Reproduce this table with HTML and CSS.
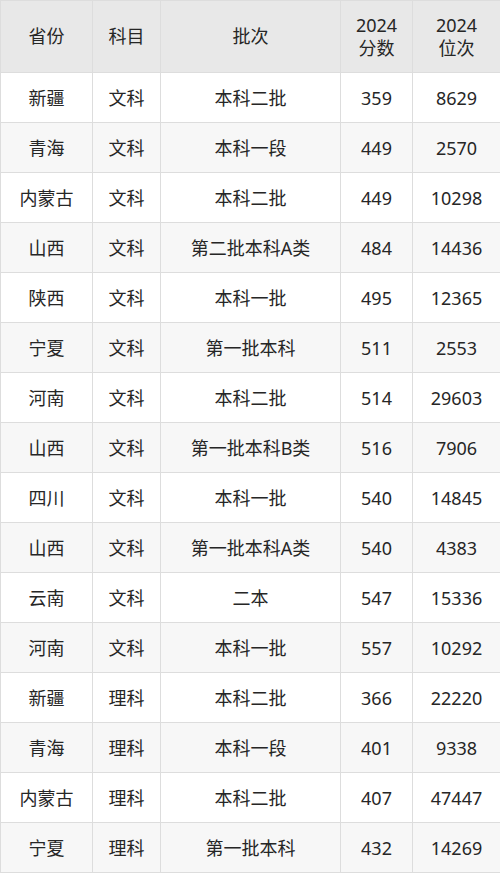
FILE: index.html
```html
<!DOCTYPE html>
<html lang="zh">
<head>
<meta charset="utf-8">
<link rel="stylesheet" href="styles.css">
</head>
<body>
<table class="score-table">
  <colgroup>
    <col class="c1"><col class="c2"><col class="c3"><col class="c4"><col class="c5">
  </colgroup>
  <thead>
    <tr><th>省份</th><th>科目</th><th>批次</th><th>2024<br>分数</th><th>2024<br>位次</th></tr>
  </thead>
  <tbody>
    <tr><td>新疆</td><td>文科</td><td>本科二批</td><td>359</td><td>8629</td></tr>
    <tr><td>青海</td><td>文科</td><td>本科一段</td><td>449</td><td>2570</td></tr>
    <tr><td>内蒙古</td><td>文科</td><td>本科二批</td><td>449</td><td>10298</td></tr>
    <tr><td>山西</td><td>文科</td><td>第二批本科A类</td><td>484</td><td>14436</td></tr>
    <tr><td>陕西</td><td>文科</td><td>本科一批</td><td>495</td><td>12365</td></tr>
    <tr><td>宁夏</td><td>文科</td><td>第一批本科</td><td>511</td><td>2553</td></tr>
    <tr><td>河南</td><td>文科</td><td>本科二批</td><td>514</td><td>29603</td></tr>
    <tr><td>山西</td><td>文科</td><td>第一批本科B类</td><td>516</td><td>7906</td></tr>
    <tr><td>四川</td><td>文科</td><td>本科一批</td><td>540</td><td>14845</td></tr>
    <tr><td>山西</td><td>文科</td><td>第一批本科A类</td><td>540</td><td>4383</td></tr>
    <tr><td>云南</td><td>文科</td><td>二本</td><td>547</td><td>15336</td></tr>
    <tr><td>河南</td><td>文科</td><td>本科一批</td><td>557</td><td>10292</td></tr>
    <tr><td>新疆</td><td>理科</td><td>本科二批</td><td>366</td><td>22220</td></tr>
    <tr><td>青海</td><td>理科</td><td>本科一段</td><td>401</td><td>9338</td></tr>
    <tr><td>内蒙古</td><td>理科</td><td>本科二批</td><td>407</td><td>47447</td></tr>
    <tr><td>宁夏</td><td>理科</td><td>第一批本科</td><td>432</td><td>14269</td></tr>
  </tbody>
</table>
</body>
</html>
```
FILE: styles.css
```css
html, body {
  margin: 0;
  padding: 0;
  background: #ffffff;
}
.score-table {
  width: 500px;
  table-layout: fixed;
  border-collapse: collapse;
  font-family: "Noto Sans", "Noto Sans CJK SC", sans-serif;
  font-size: 18px;
  color: #262626;
}
.c1 { width: 92px; }
.c2 { width: 68px; }
.c3 { width: 180px; }
.c4 { width: 72px; }
.c5 { width: 88px; }
.score-table th,
.score-table td {
  border: 1px solid #dddddd;
  text-align: center;
  vertical-align: middle;
  padding: 0;
  font-weight: normal;
}
.score-table th {
  height: 71px;
  background: #e8e8e8;
  line-height: 23px;
}
.score-table td {
  height: 49px;
  line-height: 22px;
}
.score-table tbody tr:nth-child(even) td {
  background: #f7f7f7;
}
```
